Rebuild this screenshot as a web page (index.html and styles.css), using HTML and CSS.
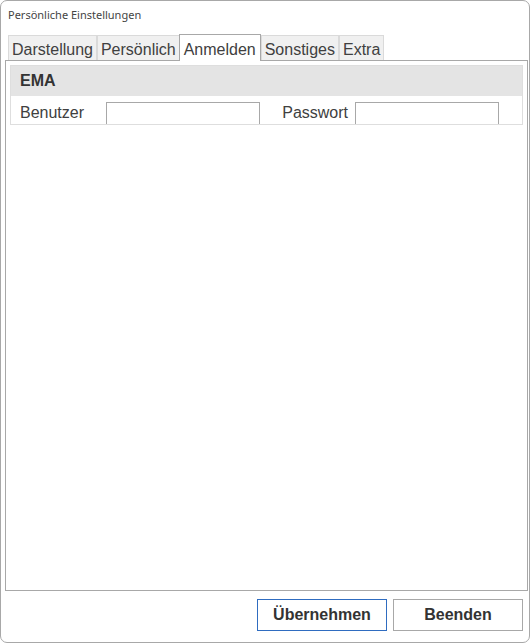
FILE: index.html
```html
<!DOCTYPE html>
<html lang="de">
<head>
    <meta charset="UTF-8">
    <title>Persönliche Einstellungen</title>
    <link rel="stylesheet" href="styles.css">
</head>
<body>
    <div class="window">
        <div class="title">Persönliche Einstellungen</div>

        <div class="tabs">
            <div class="tab">Darstellung</div>
            <div class="tab">Persönlich</div>
            <div class="tab active">Anmelden</div>
            <div class="tab">Sonstiges</div>
            <div class="tab">Extra</div>
        </div>

        <div class="panel">
            <div class="group">
                <div class="group-header">EMA</div>
                <div class="group-row">
                    <label class="field-label" for="user">Benutzer</label>
                    <input type="text" id="user" class="field-input user-input">
                    <label class="field-label right" for="pass">Passwort</label>
                    <input type="password" id="pass" class="field-input pass-input">
                </div>
            </div>
        </div>

        <div class="footer">
            <button class="btn primary">Übernehmen</button>
            <button class="btn">Beenden</button>
        </div>
    </div>
</body>
</html>
```

FILE: styles.css
```css
* {
    margin: 0;
    padding: 0;
    box-sizing: border-box;
}

body {
    background: white;
    font-family: "Liberation Sans", Arial, sans-serif;
    font-size: 16px;
    color: #333;
}

.window {
    width: 530px;
    height: 643px;
    border: 1px solid #a8a8a8;
    border-radius: 7px;
    background: white;
    display: flex;
    flex-direction: column;
}

.title {
    height: 33px;
    padding: 6px 0 0 7px;
    font-family: "Noto Sans", "Open Sans", sans-serif;
    font-size: 11px;
    line-height: 16px;
    color: #444;
}

.tabs {
    display: flex;
    align-items: flex-end;
    height: 26px;
    padding-left: 7px;
}

.tab {
    height: 25px;
    padding: 5px 3px 1px;
    line-height: 18px;
    background: #f0f0f0;
    border: 1px solid #dadada;
    border-bottom: none;
    color: #404040;
    white-space: nowrap;
}

.tab.active {
    height: 27px;
    padding: 6px 4px 2px;
    margin: 0 0 -1px -1px;
    background: white;
    border-color: #a8a8a8;
    position: relative;
    z-index: 1;
}

.panel {
    height: 531px;
    margin: 0 1px 0 4px;
    border: 1px solid #a8a8a8;
    padding: 4px 4px 0;
}

.group {
    border: 1px solid #dedede;
}

.group-header {
    height: 30px;
    line-height: 30px;
    padding-left: 9px;
    background: #e4e4e4;
    font-weight: bold;
    color: #333;
}

.group-row {
    display: flex;
    height: 28px;
}

.field-label {
    width: 95px;
    padding: 8px 0 0 9px;
    line-height: 18px;
    color: #404040;
}

.field-label.right {
    width: 95px;
    text-align: right;
    padding: 8px 7px 0 0;
}

.field-input {
    margin-top: 6px;
    height: 22px;
    border: 1px solid #a8a8a8;
    border-bottom: none;
    background: white;
    font: inherit;
    outline: none;
}

.user-input {
    width: 154px;
}

.pass-input {
    width: 144px;
}

.footer {
    display: flex;
    justify-content: flex-end;
    gap: 6px;
    padding: 8px 6px 0 0;
}

.btn {
    width: 130px;
    height: 32px;
    background: white;
    border: 1px solid #a8a8a8;
    font-family: "Liberation Sans", Arial, sans-serif;
    font-size: 16px;
    font-weight: bold;
    color: #333;
}

.btn.primary {
    border-color: #2f6cc0;
}
```
